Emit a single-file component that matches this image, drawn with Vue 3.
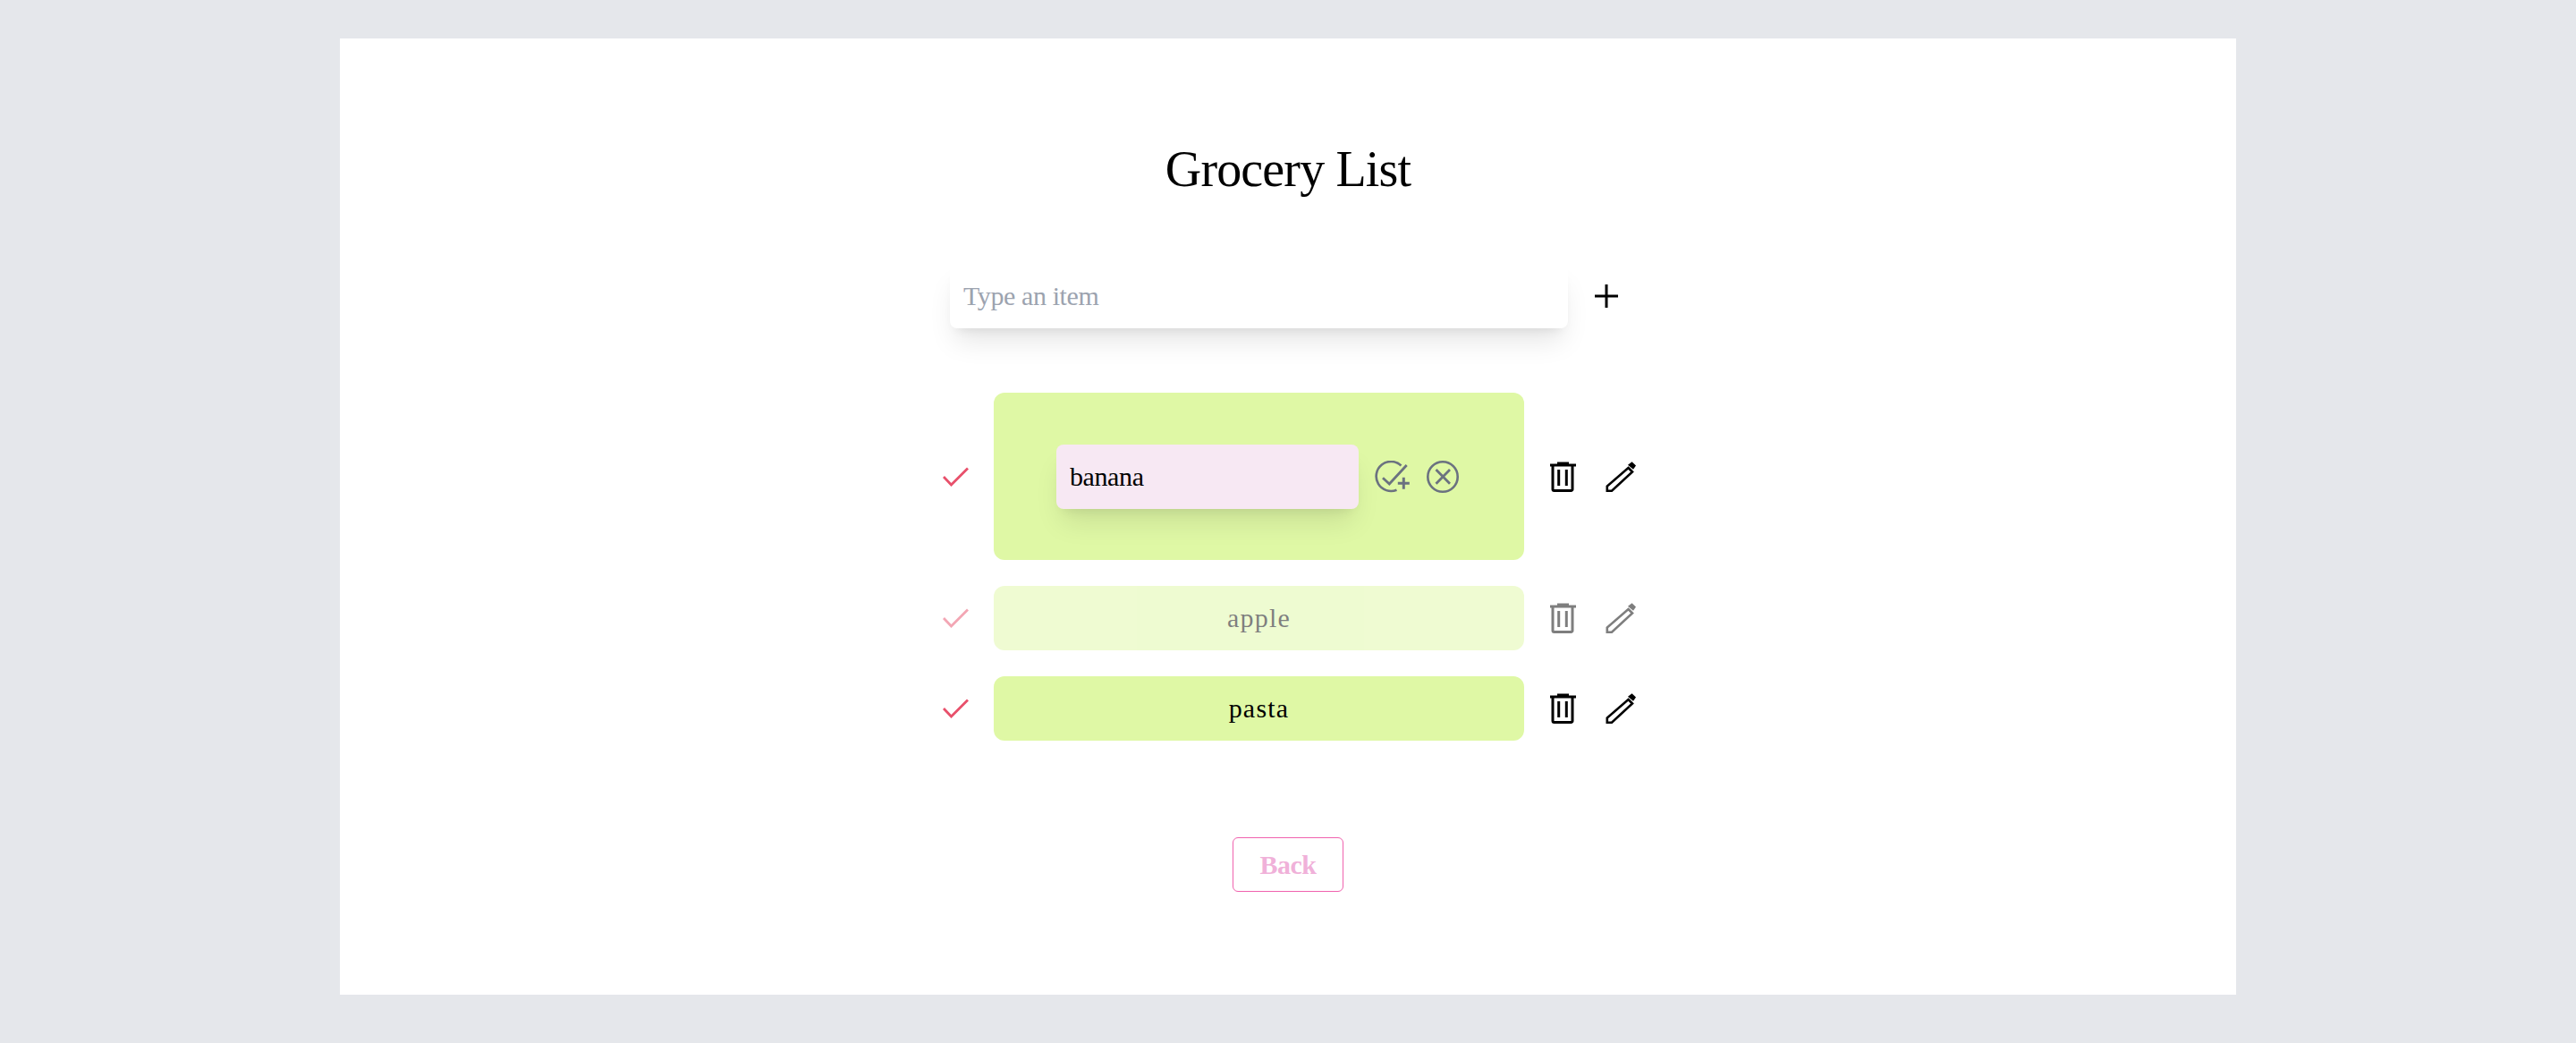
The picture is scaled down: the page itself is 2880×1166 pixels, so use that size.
<template>
  <div class="page">
    <main class="card">
      <h1 class="title">Grocery List</h1>

      <form class="add-form" @submit.prevent>
        <input class="add-input" type="text" placeholder="Type an item" />
        <button class="icon-btn plus-btn" type="button" aria-label="Add">
          <svg width="26" height="26" viewBox="0 0 26 26" fill="none" stroke="#000" stroke-width="3">
            <path d="M13 0V26M0 13H26" />
          </svg>
        </button>
      </form>

      <ul class="list">
        <li v-for="item in items" :key="item.name" class="row" :class="{ done: item.done }">
          <button class="icon-btn check-btn" type="button" aria-label="Toggle">
            <svg width="30" height="22" viewBox="0 0 30 22" fill="none" stroke="#e8506b" stroke-width="2.8">
              <path d="M1 11L9.5 20L28 1.5" />
            </svg>
          </button>

          <div class="item-box" :class="{ editing: item.editing }">
            <template v-if="item.editing">
              <input class="edit-input" type="text" :value="item.name" />
              <button class="icon-btn confirm-btn" type="button" aria-label="Save">
                <svg width="40" height="36" viewBox="0 0 40 36" fill="none" stroke="#6b7280" stroke-width="2.6">
                  <path d="M29.5 5.5A16.5 16.5 0 1 0 24.5 32.7" />
                  <path d="M9 19.3L16.3 26L35.7 5" stroke-width="2.8" />
                  <path d="M32.3 18.8V31.8M25.8 25.3H38.8" stroke-width="3" />
                </svg>
              </button>
              <button class="icon-btn cancel-btn" type="button" aria-label="Cancel">
                <svg width="36" height="36" viewBox="0 0 36 36" fill="none" stroke="#6b7280" stroke-width="2.6">
                  <circle cx="18" cy="18" r="16.7" />
                  <path d="M10.5 10L26 25.8M26 10L10.5 25.8" stroke-width="2.8" />
                </svg>
              </button>
            </template>
            <span v-else class="item-name">{{ item.name }}</span>
          </div>

          <button class="icon-btn trash-btn" type="button" aria-label="Delete">
            <svg width="30" height="34" viewBox="0 0 30 34" fill="none" stroke="#000" stroke-width="3">
              <path d="M0 4H29" />
              <path d="M8 2H21" />
              <path d="M3 4V31A1.5 1.5 0 0 0 4.5 32.5H23.5A1.5 1.5 0 0 0 25 31V4" />
              <path d="M9.7 9V27M18.3 9V27" />
            </svg>
          </button>
          <button class="icon-btn pencil-btn" type="button" aria-label="Edit">
            <svg width="34" height="34" viewBox="0 0 34 34" fill="none" stroke="#000" stroke-width="2.6">
              <path d="M25.5 7L30 11.5L7 32.7H1.8V27.5Z" />
              <path d="M25 3.8L29.5 0.3L34 4.5L31 8.8Z" fill="#000" stroke="none" />
            </svg>
          </button>
        </li>
      </ul>

      <button class="back-btn" type="button">Back</button>
    </main>
  </div>
</template>

<script setup>
const items = [
  { name: 'banana', done: false, editing: true },
  { name: 'apple', done: true, editing: false },
  { name: 'pasta', done: false, editing: false }
]
</script>

<style>
html,
body {
  margin: 0;
  background: #e5e7eb;
}
</style>

<style scoped>
.page {
  box-sizing: border-box;
  height: 1166px;
  padding-top: 43px;
  background: #e5e7eb;
  font-family: "Liberation Serif", serif;
}

.card {
  box-sizing: border-box;
  display: flex;
  flex-direction: column;
  align-items: center;
  width: 2120px;
  height: 1069px;
  margin: 0 auto;
  padding-top: 112px;
  background: #fff;
}

.title {
  margin: 0;
  font-size: 56px;
  line-height: 68px;
  letter-spacing: -0.85px;
  font-weight: 400;
  color: #000;
}

.icon-btn {
  display: flex;
  align-items: center;
  justify-content: center;
  padding: 0;
  border: 0;
  background: none;
  cursor: pointer;
}

.add-form {
  display: flex;
  align-items: center;
  gap: 23px;
  width: 756px;
  margin-top: 72px;
}

.add-input,
.edit-input {
  box-sizing: border-box;
  height: 72px;
  padding: 0 15px;
  border: 0;
  border-radius: 8px;
  font-family: inherit;
  font-size: 30px;
  letter-spacing: -0.4px;
  color: #000;
  outline: none;
  box-shadow: 0 20px 30px -6px rgba(0, 0, 0, 0.1), 0 8px 12px -8px rgba(0, 0, 0, 0.1);
}

.add-input {
  width: 691px;
  background: #fff;
}

.add-input::placeholder {
  color: #9ca3af;
  opacity: 1;
}

.plus-btn {
  width: 40px;
  height: 40px;
}

.list {
  width: 796px;
  margin: 72px 0 0;
  padding: 0;
  list-style: none;
}

.row {
  display: flex;
  align-items: center;
  margin-bottom: 29px;
}

.row.done > * {
  opacity: 0.5;
}

.check-btn {
  width: 30px;
  height: 30px;
  margin: 0 27px 0 12px;
}

.item-box {
  box-sizing: border-box;
  display: flex;
  align-items: center;
  justify-content: center;
  width: 593px;
  min-height: 72px;
  background: #dff8a5;
  border-radius: 12px;
}

.item-box.editing {
  justify-content: flex-start;
  padding: 58px 0 57px 70px;
}

.item-name {
  font-size: 30px;
  letter-spacing: 1.2px;
  color: #000;
}

.edit-input {
  width: 338px;
  background: #f7e8f3;
}

.confirm-btn {
  width: 40px;
  height: 36px;
  margin-left: 18px;
}

.cancel-btn {
  width: 36px;
  height: 36px;
  margin-left: 18px;
}

.trash-btn {
  width: 30px;
  height: 34px;
  margin-left: 29px;
}

.pencil-btn {
  width: 34px;
  height: 34px;
  margin-left: 32px;
}

.back-btn {
  width: 124px;
  height: 61px;
  margin-top: 79px;
  border: 1px solid #f062ae;
  border-radius: 6px;
  background: #fff;
  font-family: inherit;
  font-size: 30px;
  font-weight: 700;
  letter-spacing: -0.5px;
  color: #f0b1d9;
  cursor: pointer;
}
</style>
